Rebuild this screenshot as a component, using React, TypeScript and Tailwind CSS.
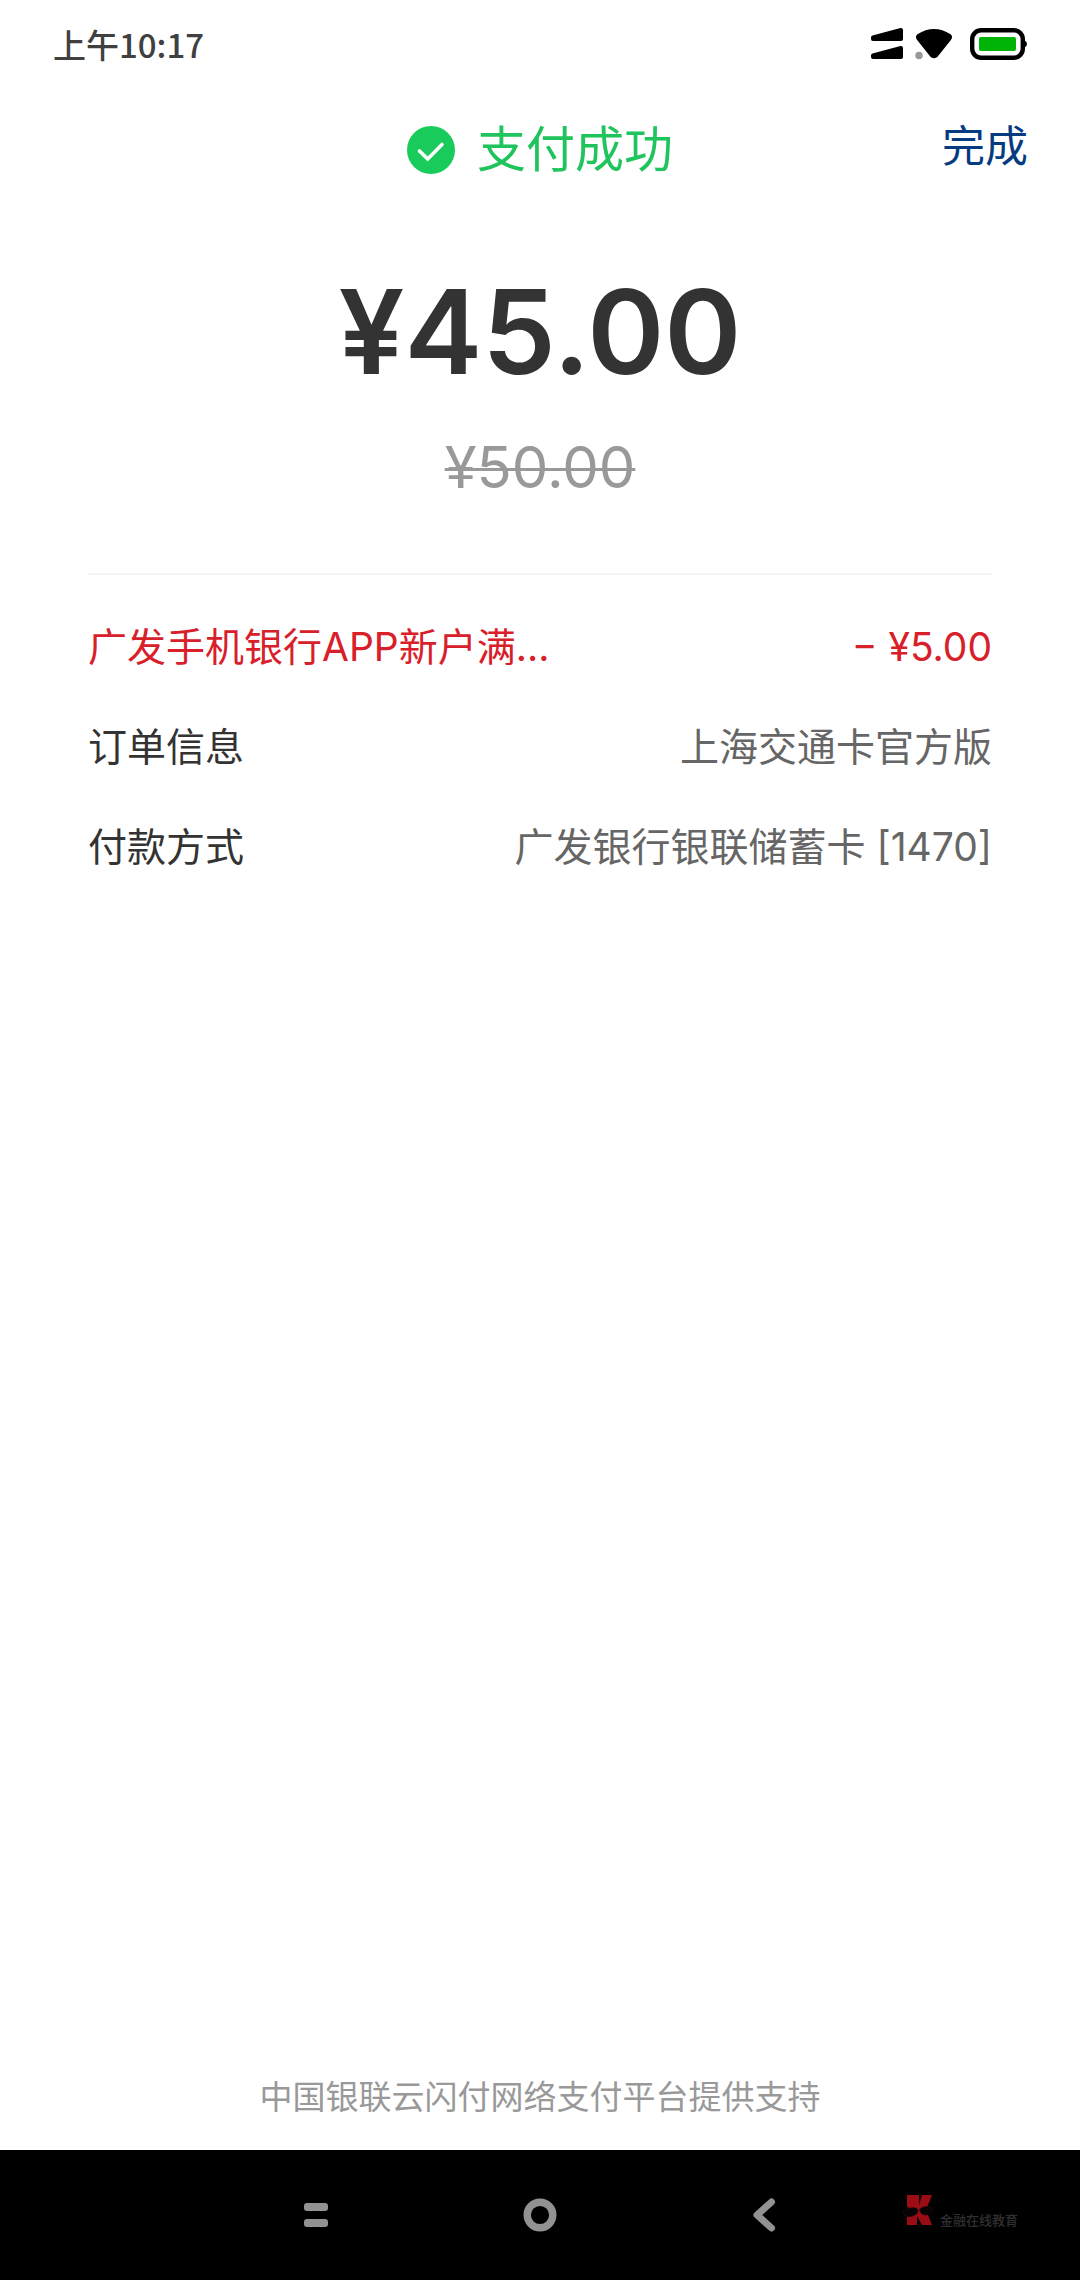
import React from "react";

interface DetailRow {
  label: string;
  value: string;
  discount?: boolean;
}

const rows: DetailRow[] = [
  { label: "广发手机银行APP新户满...", value: "− ¥5.00", discount: true },
  { label: "订单信息", value: "上海交通卡官方版" },
  { label: "付款方式", value: "广发银行银联储蓄卡 [1470]" },
];

function StatusBar() {
  return (
    <div className="flex h-[88px] items-center justify-between px-[53px] text-[#404040]">
      <span className="font-['Noto_Sans_CJK_SC',sans-serif] text-[33px] leading-[40px] font-medium">上午10:17</span>
      <div className="flex items-center">
        {/* Signal for both SIM cards */}
        <svg className="h-[34px] w-[34px]" viewBox="0 0 34 34" strokeLinejoin="round" fill="#000" stroke="#000" strokeWidth="4">
          <path d="M3 10.500 31 3V12H3Z" />
          <path d="M3 28.500 31 21V30H3Z" />
        </svg>
        <svg className="ml-[10px] h-[34px] w-[40px]" viewBox="0 0 40 34">
          <path d="M4.500 9Q20 -1 35.500 9Q36.500 10 35.500 11.500L22 28.500Q20 30 18 28.500L4.500 11.500Q3.500 10 4.500 9Z" fill="#000" stroke="#000" strokeWidth="4" strokeLinejoin="round" />
          <circle cx="5" cy="28.500" r="4.500" fill="#999" stroke="#fff" strokeWidth="1.500" />
        </svg>
        <svg className="ml-[16px] h-[34px] w-[57px]" viewBox="0 0 57 34">
          <rect x="2.200" y="3.200" width="50.600" height="27.600" rx="9" fill="none" stroke="#000" strokeWidth="4.400" />
          <path d="M54 13q3 1.500 3 4t-3 4Z" fill="#000" />
          <rect x="9" y="10" width="37" height="14" rx="2" fill="#00b407" />
        </svg>
      </div>
    </div>
  );
}

function Header() {
  return (
    <header className="grid h-[124px] grid-cols-[1fr_auto_1fr] items-center px-[52px]">
      <h1 className="col-start-2 flex items-center gap-[22px] text-[49px] leading-[60px] text-[#1fc45c]">
        <svg className="h-12 w-12" viewBox="0 0 48 48">
          <circle cx="24" cy="24" r="24" fill="#18cb5b" />
          <path d="M12.500 25 20.700 33 35 18.500" fill="none" stroke="#fff" strokeWidth="3.600" strokeLinecap="round" />
        </svg>
        支付成功
      </h1>
      <button type="button" className="justify-self-end pb-[8px] text-[43px] leading-[50px] text-[#063b80]">
        完成
      </button>
    </header>
  );
}

function NavBar() {
  return (
    <nav className="relative flex h-[130px] justify-center bg-black">
      <button type="button" aria-label="菜单" className="flex w-[224px] items-center justify-center">
        <svg className="h-[34px] w-[34px]" viewBox="0 0 34 34" fill="#929292">
          <rect x="5" y="5" width="24" height="8" rx="3" />
          <rect x="5" y="21" width="24" height="8" rx="3" />
        </svg>
      </button>
      <button type="button" aria-label="主页" className="flex w-[224px] items-center justify-center">
        <svg className="h-[34px] w-[34px]" viewBox="0 0 34 34">
          <circle cx="17" cy="17" r="12.800" fill="none" stroke="#929292" strokeWidth="7.400" />
        </svg>
      </button>
      <button type="button" aria-label="返回" className="flex w-[224px] items-center justify-center">
        <svg className="h-[34px] w-[34px]" viewBox="0 0 34 34">
          <path d="M24.500 4 10 17 24.500 30" fill="none" stroke="#929292" strokeWidth="7" strokeLinecap="round" strokeLinejoin="round" />
        </svg>
      </button>
      <div className="absolute right-[62px] bottom-[52px] flex items-end gap-[6px]">
        <svg className="h-[34px] w-[32px]" viewBox="0 0 32 34">
          <path d="M5 1h12v10L20 1h10L24 16 30 31H20L15 22v9H5V21L9 17 5 12Z" fill="#9c0c14" />
          <g fill="#080304" stroke="#250a0c" strokeWidth="0.700">
            <path d="M1 19q0-4 7-5 7-1 8 2 0 5-7 6.500-7 1-8-3.500Z" />
            <path d="M17.500 16q1-3 7-3.500 6-.5 6.500 2.500 0 5-6 6-6 .5-7.500-5Z" />
          </g>
        </svg>
        <span className="text-[13px] leading-[16px] font-medium text-[#303030]">金融在线教育</span>
      </div>
    </nav>
  );
}

export default function App() {
  return (
    <div className="flex min-h-screen flex-col bg-white font-[Inter,'Noto_Sans_CJK_SC',sans-serif]">
      <StatusBar />
      <Header />

      <main className="flex flex-1 flex-col px-[88px]">
        <p className="mt-[60px] text-center text-[117px] leading-[120px] font-semibold text-[#333]">¥45.00</p>
        <p className="mt-[45px] text-center text-[58px] leading-[60px] text-[#999]">
          <del className="decoration-[3px]">¥50.00</del>
        </p>

        <dl className="mt-[76px] border-t-2 border-[#f5f5f5] pt-[22px] text-[39px] leading-[48px]">
          {rows.map(row => (
            <div
              key={row.label}
              className={`flex h-[100px] items-center justify-between ${row.discount ? "text-[#d8202a]" : "text-[#333]"}`}
            >
              <dt>{row.label}</dt>
              <dd className={row.discount ? "" : "text-[#666]"}>{row.value}</dd>
            </div>
          ))}
        </dl>

        <p className="mt-auto pb-[36px] text-center text-[33px] leading-[34px] text-[#999]">中国银联云闪付网络支付平台提供支持</p>
      </main>

      <NavBar />
    </div>
  );
}
